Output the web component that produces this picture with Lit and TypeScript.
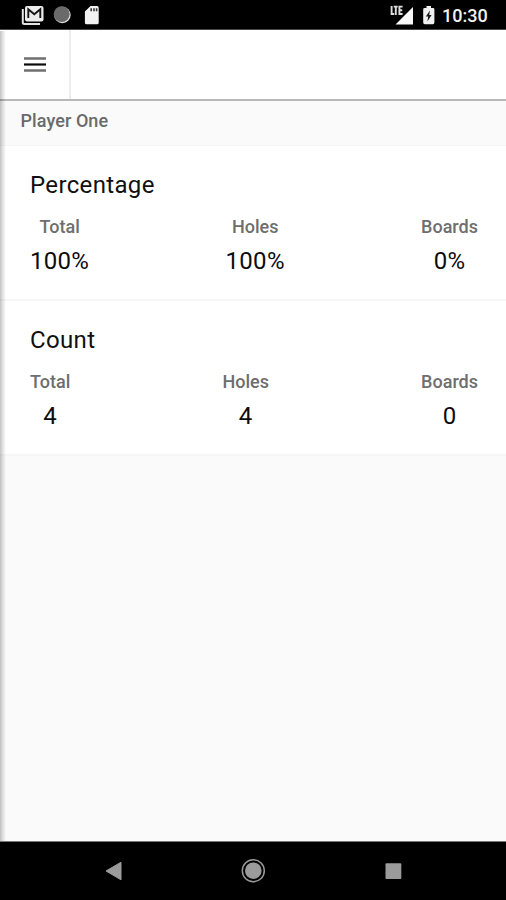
import { LitElement, html, css } from "lit";
import { customElement, property } from "lit/decorators.js";

interface Stat {
  label: string;
  value: string;
}

@customElement("stat-card")
class StatCard extends LitElement {
  @property() heading = "";
  @property({ attribute: false }) stats: Stat[] = [];

  static styles = css`
    :host {
      display: block;
      box-sizing: border-box;
      height: 155px;
      padding: 23px 28px 0 30px;
      background: #fff;
      border-bottom: 2px solid #f6f6f6;
    }
    .heading {
      font-size: 24px;
      line-height: 32px;
      letter-spacing: 0.35px;
      color: #101010;
    }
    .row {
      display: flex;
      justify-content: space-between;
      margin-top: 14px;
    }
    .stat {
      display: flex;
      flex-direction: column;
      align-items: center;
    }
    .label {
      font-size: 18px;
      line-height: 24px;
      font-weight: 500;
      color: #6e6e6e;
    }
    .value {
      margin-top: 6px;
      font-size: 24px;
      line-height: 32px;
      letter-spacing: 0.3px;
      color: #0c0c0c;
    }
  `;

  render() {
    return html`
      <div class="heading">${this.heading}</div>
      <div class="row">
        ${this.stats.map(
          (s) => html`<div class="stat">
            <span class="label">${s.label}</span>
            <span class="value">${s.value}</span>
          </div>`
        )}
      </div>
    `;
  }
}

@customElement("app-root")
class AppRoot extends LitElement {
  static styles = css`
    :host {
      display: flex;
      flex-direction: column;
      position: relative;
      width: 506px;
      height: 900px;
      overflow: hidden;
      background: #fafafa;
      font-family: Roboto, "Liberation Sans", sans-serif;
    }
    svg {
      display: block;
    }
    .status {
      display: flex;
      justify-content: space-between;
      height: 29px;
      flex: none;
      background: #000;
      border-bottom: 1px solid #4a4748;
    }
    .right {
      display: flex;
    }
    .clock {
      width: 64px;
      padding-left: 2px;
      font-size: 18px;
      font-weight: 500;
      line-height: 32px;
      color: #f2f2f2;
    }
    .toolbar {
      display: flex;
      flex: none;
      box-sizing: border-box;
      height: 71px;
      background: #fff;
      border-bottom: 2px solid #b8b8b8;
    }
    .menu {
      box-sizing: border-box;
      width: 71px;
      padding: 26px 0 0 24px;
      border-right: 2px solid #ececec;
    }
    .player {
      box-sizing: border-box;
      flex: none;
      height: 45px;
      padding-left: 20.5px;
      border-bottom: 1px solid #f5f5f5;
      font-size: 18px;
      font-weight: 500;
      letter-spacing: 0.08px;
      line-height: 39px;
      color: #6a6a6a;
    }
    .content {
      flex: 1;
    }
    .edge {
      position: absolute;
      left: 0;
      top: 31px;
      width: 6px;
      height: 810px;
      background: linear-gradient(to right, rgba(0, 0, 0, 0.24), rgba(0, 0, 0, 0.1) 50%, rgba(0, 0, 0, 0));
    }
    .nav {
      flex: none;
      height: 58px;
      background: #000;
      border-top: 1px solid #777;
    }
  `;

  render() {
    return html`
      <div class="status">
        <svg width="120" height="29" viewBox="0 0 120 29">
          <path d="M22.800 9v13.500a1.500 1.500 0 0 0 1.500 1.500H40" fill="none" stroke="#e4e4e4" stroke-width="2" />
          <rect x="25" y="6" width="18.500" height="15.500" rx="2" fill="#ececec" />
          <path d="M28.300 18V9.200l6 5.100 6-5.100V18" fill="none" stroke="#151515" stroke-width="1.900" />
          <circle cx="62.400" cy="15" r="8.300" fill="#ddd" />
          <circle cx="61.700" cy="14.200" r="7.900" fill="#6a6a6a" />
          <path d="M90.500 6H97a1.700 1.700 0 0 1 1.700 1.700v15A1.600 1.600 0 0 1 97 24.300H86.500a1.600 1.600 0 0 1-1.600-1.600V11.500z" fill="#f2f2f2" />
          <path d="M91.200 8.300v3M94 8.300v3M96.600 8.300v3" stroke="#333" stroke-width="1.600" />
        </svg>
        <div class="right">
          <svg width="53" height="29" viewBox="387 0 53 29">
            <path d="M413 7v17.500H395.500z" fill="#f8f8f8" />
            <path d="M389 5h12.500l1.500 3v6.500l-5 1.500h-9z" fill="#000" />
            <path d="M391.600 6v8h2.600M393.700 6.600h4M395.800 6.600V15M402.600 6.600h-3.200V14h3.200M399.400 10.200h2.800" fill="none" stroke="#dedede" stroke-width="1.900" />
            <path d="M426.500 6h4.500v2h2a1.400 1.400 0 0 1 1.400 1.400v13.200a1.600 1.600 0 0 1-1.600 1.600h-8a1.600 1.600 0 0 1-1.600-1.600V9.400a1.400 1.400 0 0 1 1.400-1.400h1.900z" fill="#f0f0f0" />
            <path d="M430 10.500l-4.200 6h2.400l-.8 5 4.200-6.400h-2.400z" fill="#181818" />
          </svg>
          <div class="clock">10:30</div>
        </div>
      </div>
      <div class="toolbar">
        <div class="menu">
          <svg width="22" height="18" viewBox="0 0 22 18">
            <path d="M0 2.500h22M0 14.500h22" stroke="#707070" stroke-width="2.400" />
            <path d="M0 8.500h22" stroke="#0c0c0c" stroke-width="2.200" />
          </svg>
        </div>
      </div>
      <div class="player">Player One</div>
      <stat-card
        heading="Percentage"
        .stats=${[
          { label: "Total", value: "100%" },
          { label: "Holes", value: "100%" },
          { label: "Boards", value: "0%" },
        ]}
      ></stat-card>
      <stat-card
        heading="Count"
        .stats=${[
          { label: "Total", value: "4" },
          { label: "Holes", value: "4" },
          { label: "Boards", value: "0" },
        ]}
      ></stat-card>
      <div class="content"></div>
      <div class="nav">
        <svg width="506" height="58" viewBox="0 842 506 58">
          <path d="M121 862.200v17.600L106 871z" fill="#9b9b9b" stroke="#9b9b9b" stroke-width="1" stroke-linejoin="round" />
          <circle cx="253.300" cy="870.700" r="11" fill="none" stroke="#999" stroke-width="1.500" />
          <circle cx="253.300" cy="870.700" r="8.300" fill="#9b9b9b" />
          <rect x="385.500" y="863.300" width="15.800" height="15.800" rx="1" fill="#9b9b9b" />
        </svg>
      </div>
      <div class="edge"></div>
    `;
  }
}
